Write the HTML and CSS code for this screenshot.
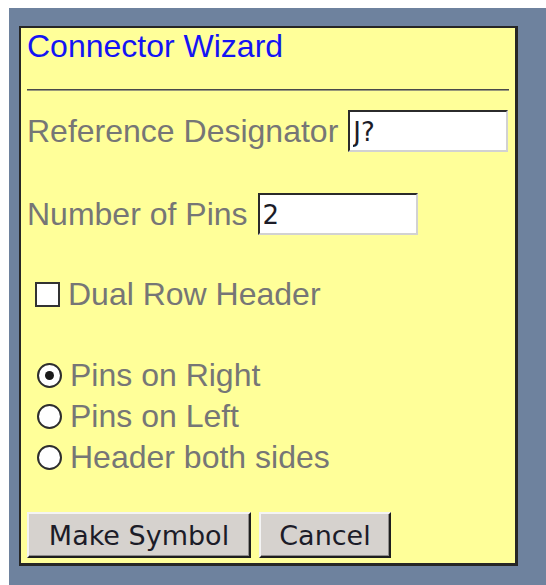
FILE: index.html
```html
<!DOCTYPE html>
<html lang="en">
<head>
<meta charset="utf-8">
<title>Connector Wizard</title>
<link rel="stylesheet" href="styles.css">
</head>
<body>
<div class="desk">
  <form class="wizard">
    <h1 class="wizard-title">Connector Wizard</h1>
    <hr class="rule">

    <div class="field field-ref">
      <label for="refdes" class="field-label">Reference Designator</label>
      <input id="refdes" class="text-in" type="text" value="J?">
    </div>

    <div class="field field-pins">
      <label for="pincount" class="field-label">Number of Pins</label>
      <input id="pincount" class="text-in" type="text" value="2">
    </div>

    <label class="check-row">
      <input type="checkbox" class="box">
      <span class="choice-text">Dual Row Header</span>
    </label>

    <div class="radio-group">
      <label class="choice">
        <input type="radio" name="side" class="dot" checked>
        <span class="choice-text">Pins on Right</span>
      </label>
      <label class="choice">
        <input type="radio" name="side" class="dot">
        <span class="choice-text">Pins on Left</span>
      </label>
      <label class="choice">
        <input type="radio" name="side" class="dot">
        <span class="choice-text">Header both sides</span>
      </label>
    </div>

    <div class="actions">
      <button type="button" class="btn btn-make">Make Symbol</button>
      <button type="button" class="btn btn-cancel">Cancel</button>
    </div>
  </form>
</div>
</body>
</html>
```

FILE: styles.css
```css
html, body {
  overflow: hidden;
}

body {
  margin: 8px 0 0 9px;
  background: #ffffff;
  font-family: "Liberation Sans", Arial, sans-serif;
}

/* slate backdrop behind the dialog */
.desk {
  background: #6e829e;
  height: 600px;
  padding: 18px 0 0 10px;
  box-sizing: border-box;
}

/* yellow dialog panel */
.wizard {
  width: 499px;
  height: 540px;
  box-sizing: border-box;
  background: #ffff99;
  border-style: solid;
  border-color: #262626;
  border-width: 2px 3px 3px 2px;
  padding: 0 6px 0 6px;
  display: flex;
  flex-direction: column;
}

.wizard-title {
  margin: 0;
  font-size: 32px;
  font-weight: normal;
  line-height: normal;
  color: #1414f4;
}

.rule {
  margin: 24px 0 0 0;
  height: 0;
  border: 0;
  border-top: 1px solid #4a4a4a;
  border-bottom: 1px solid #9a9a7a;
}

.field {
  display: flex;
  align-items: center;
  gap: 10px;
}

.field-ref {
  margin-top: 19px;
}

.field-pins {
  margin-top: 41px;
}

.field-label,
.choice-text {
  font-size: 32px;
  color: #767676;
  line-height: normal;
}

.text-in {
  width: 160px;
  height: 42px;
  box-sizing: border-box;
  margin: 0;
  padding: 2px 3px 0;
  background: #ffffff;
  border-style: solid;
  border-width: 2px;
  border-color: #2b2b2b #d2d2d2 #d2d2d2 #2b2b2b;
  font-family: "DejaVu Sans", sans-serif;
  font-size: 26px;
  color: #1c1c28;
  outline: none;
}

.check-row {
  margin-top: 41px;
  display: flex;
  align-items: center;
  gap: 8px;
  padding-left: 8px;
}

.box {
  appearance: none;
  -webkit-appearance: none;
  width: 25px;
  height: 25px;
  margin: 0;
  box-sizing: border-box;
  background: #ffffff;
  border: 2px solid #333333;
  flex: none;
}

.radio-group {
  margin-top: 42px;
  display: flex;
  flex-direction: column;
}

.choice {
  height: 41px;
  display: flex;
  align-items: center;
  gap: 8px;
  padding-left: 10px;
}

.dot {
  appearance: none;
  -webkit-appearance: none;
  width: 25px;
  height: 25px;
  margin: 0;
  box-sizing: border-box;
  border-radius: 50%;
  background: #ffffff;
  border: 2px solid #2e2e2e;
  flex: none;
  display: grid;
  place-items: center;
}

.dot:checked::before {
  content: "";
  width: 9px;
  height: 9px;
  border-radius: 50%;
  background: #1a1a1a;
}

.actions {
  margin-top: 34px;
  display: flex;
  gap: 8px;
}

.btn {
  height: 46px;
  margin: 0;
  box-sizing: border-box;
  padding: 0 18px;
  background: #d6d2ce;
  border-style: solid;
  border-width: 2px;
  border-color: #f4f4f4 #1e1e1e #1e1e1e #f4f4f4;
  box-shadow: inset -1px -1px 0 #8e8c8a;
  font-family: "DejaVu Sans", sans-serif;
  font-size: 27px;
  color: #1c1c28;
}

.btn-make {
  width: 224px;
}

.btn-cancel {
  width: 132px;
}
```
